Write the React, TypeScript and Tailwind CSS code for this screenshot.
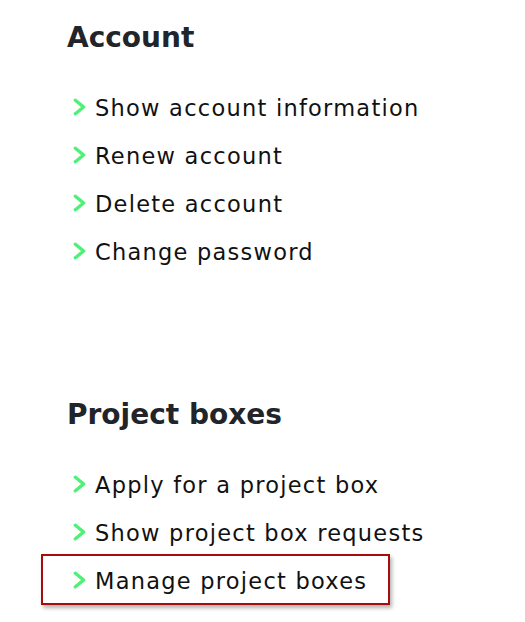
import React from 'react';

const sections = [
  {
    title: 'Account',
    items: ['Show account information', 'Renew account', 'Delete account', 'Change password'],
  },
  {
    title: 'Project boxes',
    items: ['Apply for a project box', 'Show project box requests', 'Manage project boxes'],
  },
];

const highlighted = 'Manage project boxes';

const Chevron = () => (
  <svg width="13" height="18" viewBox="0 0 13 18" className="block shrink-0">
    <polyline
      points="2.4,2.2 10.6,9 2.4,15.8"
      fill="none"
      stroke="#4ef177"
      strokeWidth="3.4"
      strokeLinecap="round"
      strokeLinejoin="round"
    />
  </svg>
);

const App = () => {
  return (
    <div className="min-h-screen bg-white pl-[67px] pt-[21px]" style={{ fontFamily: '"DejaVu Sans", sans-serif' }}>
      {sections.map((section, i) => (
        <section key={section.title} className={i > 0 ? 'mt-[122px]' : ''}>
          <h2 className="text-[28px] font-bold leading-[34px] text-[#212529]">{section.title}</h2>
          <ul className="mt-[29px]">
            {section.items.map((item) => (
              <li key={item} className="relative flex h-[48px] items-start">
                {item === highlighted && (
                  <div className="absolute left-[-26px] top-[-3px] h-[51px] w-[349px] border-2 border-[#a80b0b] shadow-[2px_3px_4px_rgba(0,0,0,0.3)]" />
                )}
                <div className="ml-[6px] mt-[14px]">
                  <Chevron />
                </div>
                <span className="ml-[9px] text-[22.5px] leading-[48px] tracking-[1.25px] text-[#111]">{item}</span>
              </li>
            ))}
          </ul>
        </section>
      ))}
    </div>
  );
};

export default App;
